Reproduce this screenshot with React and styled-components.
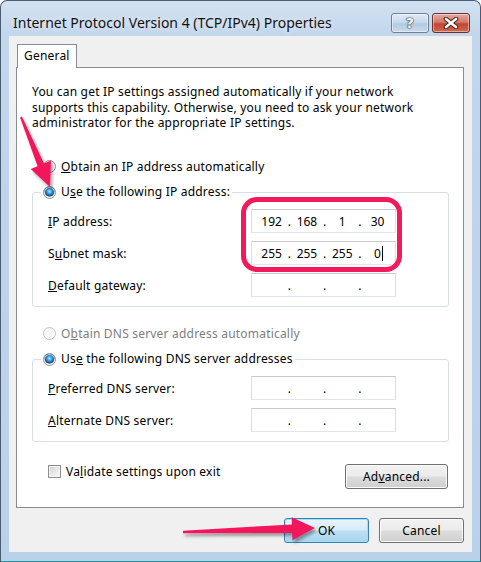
import React from "react"
import styled, { createGlobalStyle } from "styled-components"

const GlobalStyle = createGlobalStyle`
  html, body {
    margin: 0;
    padding: 0;
    background: #fff;
  }
  body {
    font-family: "Noto Sans", "Open Sans", sans-serif;
    font-size: 12px;
    letter-spacing: 0.2px;
    color: #000;
  }
`

const Window = styled.div`
  position: relative;
  box-sizing: border-box;
  width: 481px;
  height: 562px;
  display: flex;
  flex-direction: column;
  padding: 0 8px 9px;
  border: 1px solid #4b5c70;
  border-bottom-color: #1f95aa;
  border-radius: 7px 7px 0 0;
  background: linear-gradient(180deg, #d2e1f1 0px, #c2d6ec 34px, #bad1ea 100%);
  overflow: hidden;
`

const TitleBar = styled.div`
  height: 35px;
  display: flex;
  align-items: flex-start;
  padding: 0 2px 0 4px;
`

const Title = styled.div`
  margin-top: 12px;
  font-size: 14px;
  letter-spacing: 0;
  line-height: 20px;
  color: #111;
  text-shadow: 0 0 6px rgba(255, 255, 255, 0.9);
`

const Caption = styled.div`
  margin: 12px 0 0 auto;
  display: flex;
  gap: 3px;
`

const CaptionButton = styled.div`
  box-sizing: border-box;
  width: 38px;
  height: 20px;
  border-radius: 3px;
  display: flex;
  align-items: center;
  justify-content: center;
  border: 1px solid ${p => (p.$close ? "#6e2f2a" : "#6f8096")};
  box-shadow: inset 0 0 0 1px rgba(255, 255, 255, 0.45);
  background: ${p =>
    p.$close
      ? "linear-gradient(180deg, #e6aaa1 0%, #d27a6c 45%, #c4452f 55%, #cf6a52 100%)"
      : "linear-gradient(180deg, #e0eaf5 0%, #c9d9ec 45%, #b4c8e0 55%, #c8dbef 100%)"};
`

const HelpGlyph = styled.span`
  font-family: "DejaVu Sans", sans-serif;
  font-weight: bold;
  font-size: 14px;
  line-height: 1;
  color: #f4f7fb;
  text-shadow: 0 0 1px #3b4656, 0 0 1px #3b4656, 0 0 2px #3b4656;
`

const Client = styled.div`
  flex: 1;
  display: flex;
  flex-direction: column;
  background: #f0f0f0;
  padding: 8px 8px 9px 7px;
`

const TabStrip = styled.div`
  display: flex;
  padding-left: 1px;
`

const Tab = styled.div`
  position: relative;
  z-index: 1;
  box-sizing: border-box;
  height: 24px;
  margin-bottom: -1px;
  padding: 0 6px;
  background: #fff;
  border: 1px solid #898c95;
  border-bottom: none;
  line-height: 22px;
`

const Panel = styled.div`
  box-sizing: border-box;
  height: 441px;
  display: flex;
  flex-direction: column;
  padding: 16px 14px 0 15px;
  background: #fff;
  border: 1px solid #898c95;
`

const Description = styled.p`
  margin: 0;
  line-height: 15.5px;
  white-space: nowrap;
`

const Acc = styled.u`
  text-decoration: underline;
  text-underline-offset: 1px;
`

const Choice = styled.label`
  display: flex;
  align-items: center;
  height: 16px;
  gap: 5px;
  margin: ${p => p.$margin || "0"};
  color: ${p => (p.$disabled ? "#7d7d7d" : "#000")};
  white-space: nowrap;
`

const RadioDot = styled.span`
  box-sizing: border-box;
  width: 13px;
  height: 13px;
  flex: none;
  border-radius: 50%;
  border: 1px solid ${p => (p.$disabled ? "#c2c2c2" : "#8c8e91")};
  background: ${p =>
    p.$checked
      ? "radial-gradient(circle at 50% 40%, #b4e4ff 0%, #3d9ee0 28%, #175f9e 48%, #0e3c69 58%, #eaeaea 62%, #fafafa 100%)"
      : p.$disabled
      ? "linear-gradient(180deg, #f4f4f4, #fbfbfb)"
      : "linear-gradient(135deg, #dadada, #fdfdfd)"};
  box-shadow: inset 0 0 0 1px rgba(255, 255, 255, 0.7);
`

const CheckBox = styled.span`
  box-sizing: border-box;
  width: 13px;
  height: 13px;
  flex: none;
  border: 1px solid #8e8f8f;
  background: linear-gradient(135deg, #d3d3d3, #fbfbfb);
  box-shadow: inset 0 0 0 1px #f4f4f4;
`

const Group = styled.fieldset`
  margin: 10px 0 0;
  padding: 9px 52px 9px 15px;
  min-inline-size: auto;
  border: 1px solid #d5dfe5;
  border-radius: 3px;
  display: flex;
  flex-direction: column;
  gap: 8px;
`

const Legend = styled.legend`
  margin-left: -7px;
  padding: 0 2px;
  line-height: 16px;
`

const FieldRow = styled.div`
  display: flex;
  align-items: center;
  height: 24px;
`

const FieldLabel = styled.span`
  flex: 1;
`

const IpField = styled.div`
  box-sizing: border-box;
  width: 145px;
  height: 24px;
  display: flex;
  align-items: center;
  padding-left: 4px;
  border: 1px solid;
  border-color: #c7cbd1 #dadee3 #e2e5e9 #dadee3;
  background: #fff;
  letter-spacing: 0;
`

const Segment = styled.span`
  flex: 0 0 31.3px;
  text-align: center;
  white-space: pre;
`

const Dot = styled.span`
  flex: 0 0 4px;
  text-align: center;
`

const Caret = styled.span`
  display: inline-block;
  width: 1px;
  height: 15px;
  margin: 0 -2px 0 1px;
  vertical-align: -3px;
  background: #000;
`

const BottomRow = styled.div`
  display: flex;
  align-items: flex-start;
  margin-top: 21px;
  padding-left: 16px;
`

const Button = styled.button`
  box-sizing: border-box;
  width: ${p => p.$width || 85}px;
  height: 25px;
  margin: ${p => p.$margin || "0"};
  padding: 0;
  font-family: inherit;
  font-size: 12px;
  letter-spacing: 0.2px;
  color: #000;
  border-radius: 3px;
  border: 1px solid ${p => (p.$default ? "#3c7fb1" : "#707070")};
  box-shadow: inset 0 0 0 1px ${p => (p.$default ? "#9ee0fa" : "#fcfcfc")};
  background: ${p =>
    p.$default
      ? "linear-gradient(180deg, #e7f4fb 0%, #d6ecf8 49%, #bcdff3 51%, #a9d4ec 100%)"
      : "linear-gradient(180deg, #f2f2f2 0%, #ebebeb 49%, #dddddd 51%, #cfcfcf 100%)"};
`

const ButtonBar = styled.div`
  display: flex;
  justify-content: flex-end;
  gap: 10px;
  margin-top: 10px;
`

const Highlight = styled.div`
  position: absolute;
  left: 240px;
  top: 196px;
  width: 161px;
  height: 75px;
  box-sizing: border-box;
  border: 5px solid #f2195c;
  border-radius: 16px;
  pointer-events: none;
`

const Overlay = styled.svg`
  position: absolute;
  left: -1px;
  top: -1px;
  pointer-events: none;
`

const CloseIcon = () => (
  <svg width="16" height="12" viewBox="0 0 16 12">
    <path d="M3 2 L13 10 M13 2 L3 10" stroke="#4a1f1b" strokeWidth="4.6" strokeLinecap="round" />
    <path d="M3 2 L13 10 M13 2 L3 10" stroke="#fff" strokeWidth="2.6" strokeLinecap="round" />
  </svg>
)

// tapered arrow from tail to tip
const arrowPoints = (tx, ty, px, py, head = 24, half = 11, tailW = 1, baseW = 3.5) => {
  const dx = px - tx
  const dy = py - ty
  const len = Math.hypot(dx, dy)
  const ux = dx / len
  const uy = dy / len
  const nx = -uy
  const ny = ux
  const bx = px - ux * head
  const by = py - uy * head
  const pts = [
    [tx + nx * tailW, ty + ny * tailW],
    [bx + nx * baseW, by + ny * baseW],
    [bx + nx * half, by + ny * half],
    [px, py],
    [bx - nx * half, by - ny * half],
    [bx - nx * baseW, by - ny * baseW],
    [tx - nx * tailW, ty - ny * tailW],
  ]
  return pts.map(p => p.map(v => v.toFixed(1)).join(",")).join(" ")
}

const Arrows = () => (
  <Overlay width="481" height="562">
    <defs>
      <filter id="shadow" x="-20%" y="-20%" width="140%" height="140%">
        <feDropShadow dx="2" dy="3" stdDeviation="1.6" floodColor="#000" floodOpacity="0.35" />
      </filter>
    </defs>
    <g fill="#f2195c" filter="url(#shadow)">
      <polygon points={arrowPoints(21, 117, 50, 187)} />
      <polygon points={arrowPoints(183, 532, 315, 528, 23, 11.5, 1.3, 4.2)} />
    </g>
  </Overlay>
)

const IpAddress = ({ parts = ["", "", "", ""], caret }) => (
  <IpField>
    <Segment>{parts[0]}</Segment>
    <Dot>.</Dot>
    <Segment>{parts[1]}</Segment>
    <Dot>.</Dot>
    <Segment>{parts[2]}</Segment>
    <Dot>.</Dot>
    <Segment>
      {parts[3]}
      {caret && <Caret />}
    </Segment>
  </IpField>
)

const Field = ({ label, parts, caret }) => (
  <FieldRow>
    <FieldLabel>{label}</FieldLabel>
    <IpAddress parts={parts} caret={caret} />
  </FieldRow>
)

export default function App() {
  return (
    <>
      <GlobalStyle />
      <Window>
        <TitleBar>
          <Title>Internet Protocol Version 4 (TCP/IPv4) Properties</Title>
          <Caption>
            <CaptionButton>
              <HelpGlyph>?</HelpGlyph>
            </CaptionButton>
            <CaptionButton $close>
              <CloseIcon />
            </CaptionButton>
          </Caption>
        </TitleBar>
        <Client>
          <TabStrip>
            <Tab>General</Tab>
          </TabStrip>
          <Panel>
            <Description>
              You can get IP settings assigned automatically if your network
              <br />
              supports this capability. Otherwise, you need to ask your network
              <br />
              administrator for the appropriate IP settings.
            </Description>

            <Choice $margin="27.5px 0 0 11px">
              <RadioDot />
              <span>
                <Acc>O</Acc>btain an IP address automatically
              </span>
            </Choice>

            <Group>
              <Legend>
                <Choice>
                  <RadioDot $checked />
                  <span>
                    U<Acc>s</Acc>e the following IP address:
                  </span>
                </Choice>
              </Legend>
              <Field
                label={<><Acc>I</Acc>P address:</>}
                parts={["192", "168", "1", "30"]}
              />
              <Field
                label={<>S<Acc>u</Acc>bnet mask:</>}
                parts={["255", "255", "255", "0"]}
                caret
              />
              <Field label={<><Acc>D</Acc>efault gateway:</>} />
            </Group>

            <Choice $margin="18px 0 0 11px" $disabled>
              <RadioDot $disabled />
              <span>
                O<Acc>b</Acc>tain DNS server address automatically
              </span>
            </Choice>

            <Group>
              <Legend>
                <Choice>
                  <RadioDot $checked />
                  <span>
                    Us<Acc>e</Acc> the following DNS server addresses
                  </span>
                </Choice>
              </Legend>
              <Field label={<><Acc>P</Acc>referred DNS server:</>} />
              <Field label={<><Acc>A</Acc>lternate DNS server:</>} />
            </Group>

            <BottomRow>
              <Choice>
                <CheckBox />
                <span>
                  Va<Acc>l</Acc>idate settings upon exit
                </span>
              </Choice>
              <Button $width={103} $margin="1px 1px 0 auto">
                Ad<Acc>v</Acc>anced...
              </Button>
            </BottomRow>
          </Panel>
          <ButtonBar>
            <Button $default>OK</Button>
            <Button>Cancel</Button>
          </ButtonBar>
        </Client>
        <Highlight />
        <Arrows />
      </Window>
    </>
  )
}
